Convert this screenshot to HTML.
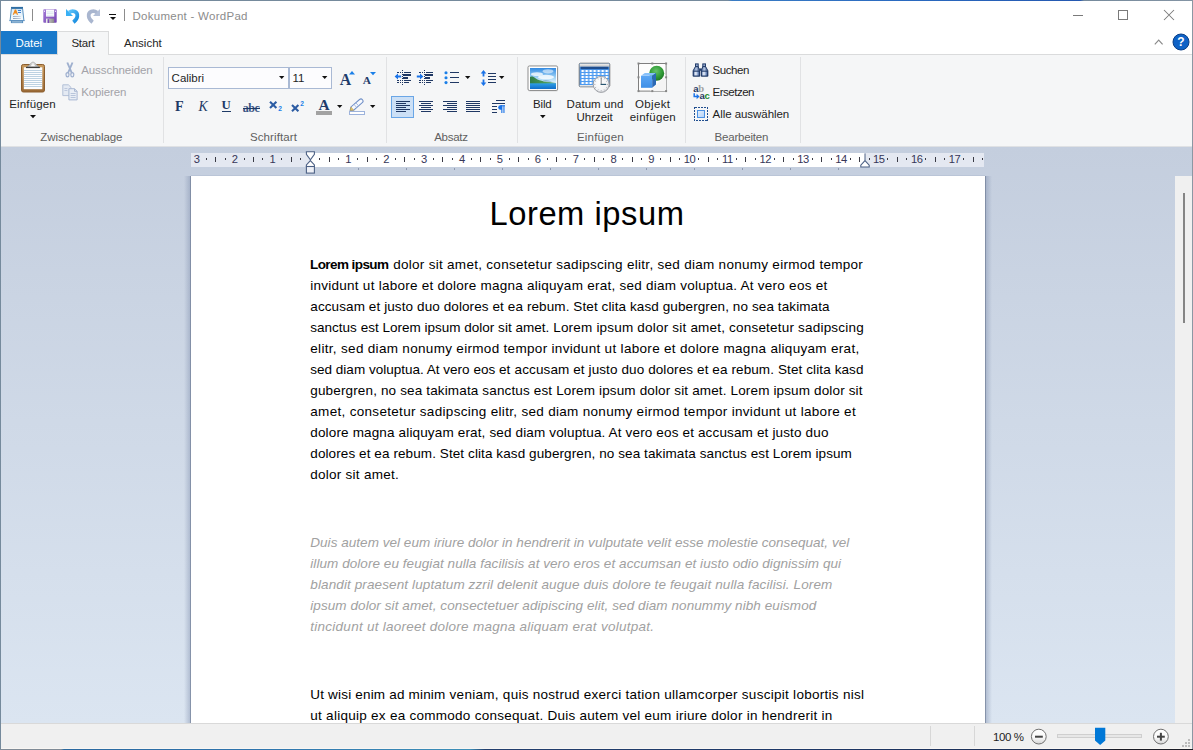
<!DOCTYPE html>
<html lang="de">
<head>
<meta charset="utf-8">
<title>Dokument - WordPad</title>
<style>
html,body{margin:0;padding:0;}
body{width:1193px;height:750px;position:relative;overflow:hidden;background:#fff;font-family:"Liberation Sans",sans-serif;}
#win{position:absolute;left:0;top:0;width:1193px;height:750px;overflow:hidden;background:#fff;}
.a{position:absolute;}
.t{position:absolute;white-space:pre;font-family:"Liberation Sans",sans-serif;}
.t b{font-weight:700;}
svg{position:absolute;overflow:visible;}
/* frame */
#bt{left:0;top:0;width:1193px;height:1px;background:linear-gradient(90deg,#758a9c 0,#758a9c 728px,#3a7cc4 732px,#2a6ac0 900px,#2458b0 1080px,#758a9c 1084px,#8494a4 1193px);}
#bl{left:0;top:0;width:1px;height:749px;background:#758a9c;}
#br{left:1192px;top:0;width:1px;height:749px;background:#8b97a3;}
#bw{left:1px;top:748px;width:1191px;height:1px;background:#f9f6f3;}
#bb{left:0;top:749px;width:1193px;height:1px;background:linear-gradient(90deg,#808b97 0,#808b97 61px,#2a689f 64px,#2f74ad 250px,#3d8fb8 470px,#223f6e 485px,#1d3868 800px,#1b2c50 1100px,#1a1c26 1115px,#1a1c26 1193px);}
/* tabs */
#tabline{left:1px;top:54px;width:1191px;height:1px;background:#dadbdc;}
#datei{left:1px;top:31px;width:56px;height:23px;background:#1979ca;}
#start{left:57px;top:31px;width:50px;height:24px;background:#f5f6f7;border:1px solid #dadbdc;border-bottom:none;box-sizing:content-box;}
/* ribbon */
#ribbon{left:1px;top:55px;width:1191px;height:91px;background:#f5f6f7;}
#ribline{left:1px;top:146px;width:1191px;height:1px;background:#dfe1e4;}
.sep{position:absolute;top:57px;width:1px;height:86px;background:#e1e2e4;}
/* workspace */
#ws{left:1px;top:147px;width:1191px;height:576px;background:linear-gradient(180deg,#c4cede 0%,#dbe5f1 100%);}
#rulerbg{left:191px;top:153px;width:793px;height:14px;background:#e4e8f1;}
#rulerw{left:310px;top:153px;width:555px;height:14px;background:#fff;}
#page{left:191px;top:176px;width:794px;height:547px;background:#fff;}
#shl{left:184px;top:176px;width:7px;height:547px;background:linear-gradient(90deg,rgba(130,145,175,0) 0,rgba(130,145,175,.45) 6px,rgba(110,124,150,.78) 6px,rgba(110,124,150,.78) 7px);}
#shr{left:985px;top:176px;width:7px;height:547px;background:linear-gradient(270deg,rgba(130,145,175,0) 0,rgba(130,145,175,.45) 6px,rgba(110,124,150,.78) 6px,rgba(110,124,150,.78) 7px);}
#sht{left:191px;top:175px;width:794px;height:1px;background:rgba(140,155,185,.18);}
/* scrollbar */
#sb{left:1175px;top:176px;width:17px;height:547px;background:#f0f0f0;}
#thumb{left:1183px;top:193px;width:2px;height:130px;background:#858585;}
/* status */
#status{left:1px;top:723px;width:1191px;height:25px;background:#f0f0f0;border-top:1px solid #d9d9d9;box-sizing:border-box;}
.ssep{position:absolute;top:726px;width:1px;height:20px;background:#d7d7d7;}
/* combos */
.combo{position:absolute;top:67px;height:22px;box-sizing:border-box;border:1px solid #a9b9d4;background:#fcfcfe;}
.arr{position:absolute;width:0;height:0;border-left:3px solid transparent;border-right:3px solid transparent;border-top:3px solid #1a1a1a;}
</style>
</head>
<body>
<div id="win">
<div class="a" id="datei"></div>
<div class="a" id="tabline"></div>
<div class="a" id="start"></div>
<div class="a" id="ribbon"></div>
<div class="a" id="ribline"></div>
<div class="sep" style="left:163px"></div>
<div class="sep" style="left:386px"></div>
<div class="sep" style="left:517px"></div>
<div class="sep" style="left:685px"></div>
<div class="sep" style="left:800px"></div>
<div class="a" id="ws"></div>
<div class="a" id="rulerbg"></div>
<div class="a" id="rulerw"></div>
<div class="a" id="shl"></div>
<div class="a" id="shr"></div>
<div class="a" id="sht"></div>
<div class="a" id="page"></div>
<svg width="1193" height="750" style="left:0;top:0" shape-rendering="crispEdges"><g fill="#3a3a44"><rect x="206" y="158" width="1" height="2"/><rect x="215" y="157" width="1" height="5"/><rect x="225" y="158" width="1" height="2"/><rect x="244" y="158" width="1" height="2"/><rect x="253" y="157" width="1" height="5"/><rect x="262" y="158" width="1" height="2"/><rect x="281" y="158" width="1" height="2"/><rect x="291" y="157" width="1" height="5"/><rect x="300" y="158" width="1" height="2"/><rect x="319" y="158" width="1" height="2"/><rect x="329" y="157" width="1" height="5"/><rect x="338" y="158" width="1" height="2"/><rect x="357" y="158" width="1" height="2"/><rect x="367" y="157" width="1" height="5"/><rect x="376" y="158" width="1" height="2"/><rect x="395" y="158" width="1" height="2"/><rect x="404" y="157" width="1" height="5"/><rect x="414" y="158" width="1" height="2"/><rect x="433" y="158" width="1" height="2"/><rect x="442" y="157" width="1" height="5"/><rect x="452" y="158" width="1" height="2"/><rect x="471" y="158" width="1" height="2"/><rect x="480" y="157" width="1" height="5"/><rect x="490" y="158" width="1" height="2"/><rect x="509" y="158" width="1" height="2"/><rect x="518" y="157" width="1" height="5"/><rect x="528" y="158" width="1" height="2"/><rect x="547" y="158" width="1" height="2"/><rect x="556" y="157" width="1" height="5"/><rect x="565" y="158" width="1" height="2"/><rect x="584" y="158" width="1" height="2"/><rect x="594" y="157" width="1" height="5"/><rect x="603" y="158" width="1" height="2"/><rect x="622" y="158" width="1" height="2"/><rect x="632" y="157" width="1" height="5"/><rect x="641" y="158" width="1" height="2"/><rect x="660" y="158" width="1" height="2"/><rect x="670" y="157" width="1" height="5"/><rect x="679" y="158" width="1" height="2"/><rect x="698" y="158" width="1" height="2"/><rect x="708" y="157" width="1" height="5"/><rect x="717" y="158" width="1" height="2"/><rect x="736" y="158" width="1" height="2"/><rect x="745" y="157" width="1" height="5"/><rect x="755" y="158" width="1" height="2"/><rect x="774" y="158" width="1" height="2"/><rect x="783" y="157" width="1" height="5"/><rect x="793" y="158" width="1" height="2"/><rect x="812" y="158" width="1" height="2"/><rect x="821" y="157" width="1" height="5"/><rect x="831" y="158" width="1" height="2"/><rect x="850" y="158" width="1" height="2"/><rect x="859" y="157" width="1" height="5"/><rect x="869" y="158" width="1" height="2"/><rect x="887" y="158" width="1" height="2"/><rect x="897" y="157" width="1" height="5"/><rect x="906" y="158" width="1" height="2"/><rect x="925" y="158" width="1" height="2"/><rect x="935" y="157" width="1" height="5"/><rect x="944" y="158" width="1" height="2"/><rect x="963" y="158" width="1" height="2"/><rect x="973" y="157" width="1" height="5"/><rect x="982" y="158" width="1" height="2"/></g><g fill="#8e99b0"><rect x="358" y="168" width="1" height="2"/><rect x="406" y="168" width="1" height="2"/><rect x="454" y="168" width="1" height="2"/><rect x="502" y="168" width="1" height="2"/><rect x="550" y="168" width="1" height="2"/><rect x="598" y="168" width="1" height="2"/><rect x="646" y="168" width="1" height="2"/><rect x="694" y="168" width="1" height="2"/><rect x="742" y="168" width="1" height="2"/><rect x="790" y="168" width="1" height="2"/><rect x="838" y="168" width="1" height="2"/></g></svg>
<div class="t rn" style="left:181.7px;top:151.9px;width:30px;text-align:center;font-size:11.2px;line-height:15px;color:#363658;letter-spacing:-0.5px">3</div>
<div class="t rn" style="left:219.5px;top:151.9px;width:30px;text-align:center;font-size:11.2px;line-height:15px;color:#363658;letter-spacing:-0.5px">2</div>
<div class="t rn" style="left:257.4px;top:151.9px;width:30px;text-align:center;font-size:11.2px;line-height:15px;color:#363658;letter-spacing:-0.5px">1</div>
<div class="t rn" style="left:333.2px;top:151.9px;width:30px;text-align:center;font-size:11.2px;line-height:15px;color:#363658;letter-spacing:-0.5px">1</div>
<div class="t rn" style="left:371.1px;top:151.9px;width:30px;text-align:center;font-size:11.2px;line-height:15px;color:#363658;letter-spacing:-0.5px">2</div>
<div class="t rn" style="left:408.9px;top:151.9px;width:30px;text-align:center;font-size:11.2px;line-height:15px;color:#363658;letter-spacing:-0.5px">3</div>
<div class="t rn" style="left:446.8px;top:151.9px;width:30px;text-align:center;font-size:11.2px;line-height:15px;color:#363658;letter-spacing:-0.5px">4</div>
<div class="t rn" style="left:484.7px;top:151.9px;width:30px;text-align:center;font-size:11.2px;line-height:15px;color:#363658;letter-spacing:-0.5px">5</div>
<div class="t rn" style="left:522.6px;top:151.9px;width:30px;text-align:center;font-size:11.2px;line-height:15px;color:#363658;letter-spacing:-0.5px">6</div>
<div class="t rn" style="left:560.5px;top:151.9px;width:30px;text-align:center;font-size:11.2px;line-height:15px;color:#363658;letter-spacing:-0.5px">7</div>
<div class="t rn" style="left:598.3px;top:151.9px;width:30px;text-align:center;font-size:11.2px;line-height:15px;color:#363658;letter-spacing:-0.5px">8</div>
<div class="t rn" style="left:636.2px;top:151.9px;width:30px;text-align:center;font-size:11.2px;line-height:15px;color:#363658;letter-spacing:-0.5px">9</div>
<div class="t rn" style="left:674.4px;top:151.9px;width:30px;text-align:center;font-size:11.2px;line-height:15px;color:#363658;letter-spacing:-0.5px">10</div>
<div class="t rn" style="left:712.3px;top:151.9px;width:30px;text-align:center;font-size:11.2px;line-height:15px;color:#363658;letter-spacing:-0.5px">11</div>
<div class="t rn" style="left:750.2px;top:151.9px;width:30px;text-align:center;font-size:11.2px;line-height:15px;color:#363658;letter-spacing:-0.5px">12</div>
<div class="t rn" style="left:788.0px;top:151.9px;width:30px;text-align:center;font-size:11.2px;line-height:15px;color:#363658;letter-spacing:-0.5px">13</div>
<div class="t rn" style="left:825.9px;top:151.9px;width:30px;text-align:center;font-size:11.2px;line-height:15px;color:#363658;letter-spacing:-0.5px">14</div>
<div class="t rn" style="left:863.8px;top:151.9px;width:30px;text-align:center;font-size:11.2px;line-height:15px;color:#363658;letter-spacing:-0.5px">15</div>
<div class="t rn" style="left:901.7px;top:151.9px;width:30px;text-align:center;font-size:11.2px;line-height:15px;color:#363658;letter-spacing:-0.5px">16</div>
<div class="t rn" style="left:939.6px;top:151.9px;width:30px;text-align:center;font-size:11.2px;line-height:15px;color:#363658;letter-spacing:-0.5px">17</div>
<svg width="12" height="26" style="left:304px;top:150px" viewBox="0 0 12 26">
<path d="M2.4 1.7h8v2.6l-4 5.6l-4-5.6z" fill="#fff" stroke="#4d6185" stroke-width="1.1"/>
<path d="M6.4 10.6l4 4.400v1.500h-8v-1.500z" fill="#fff" stroke="#4d6185" stroke-width="1.1"/>
<rect x="2.4" y="16.500" width="8" height="6.600" fill="#eef0f6" stroke="#4d6185" stroke-width="1.1"/>
</svg>
<svg width="12" height="16" style="left:858.6px;top:152px" viewBox="0 0 12 16">
<path d="M6 1.400v7" stroke="#4d6185" stroke-width="1"/>
<path d="M6 8.600l4.200 4.600v1.800h-8.400v-1.800z" fill="#fff" stroke="#4d6185" stroke-width="1.100"/>
</svg>
<div class="a" id="sb"></div>
<div class="a" id="thumb"></div>
<div class="a" id="status"></div>
<div class="ssep" style="left:930px"></div>
<div class="ssep" style="left:974px"></div>
<div class="combo" style="left:168px;width:121px"></div>
<div class="combo" style="left:289px;width:43px"></div>
<!-- title bar icons -->
<svg width="18" height="18" style="left:8px;top:6px" viewBox="0 0 18 18">
<defs><linearGradient id="gApp" x1="0" y1="0" x2="0" y2="1"><stop offset="0" stop-color="#d9ecfa"/><stop offset="1" stop-color="#f7fbfe"/></linearGradient>
<linearGradient id="gAl" x1="0" y1="0" x2="1" y2="0"><stop offset="0" stop-color="#8797ad"/><stop offset="1" stop-color="#c3cede"/></linearGradient></defs>
<path d="M3.400 2.600h11.200l1.300 11.900H2.100z" fill="url(#gApp)" stroke="#4a86b8" stroke-width=".9"/>
<rect x="3" y=".9" width="12" height="1.800" fill="#2f6ea3"/>
<path d="M1 14.600h16" stroke="#6a9cc8" stroke-width=".9" opacity=".85"/>
<rect x="3.300" y="15.200" width="11.400" height="1.500" fill="#f2f7fc" stroke="#4a86b8" stroke-width=".8"/>
<path d="M4.700 8.800L6.800 3.500h1.300l2 5.300H8.800L8.400 7.600H6.400L6 8.800z" fill="#f08a1c"/>
<rect x="9.900" y="4" width="3.100" height="1" fill="#3e7fd0"/>
<rect x="9.900" y="6" width="3.100" height="1" fill="#3e7fd0"/>
<rect x="5" y="10.200" width="7.600" height=".8" fill="url(#gAl)"/>
<rect x="5" y="12" width="7.800" height=".9" fill="url(#gAl)"/>
</svg>
<div class="a" style="left:32px;top:9px;width:1px;height:12px;background:#8c8c8c"></div>
<div class="a" style="left:124px;top:9px;width:1px;height:12px;background:#8c8c8c"></div>
<svg width="14" height="14" style="left:43px;top:9px" viewBox="0 0 14 14">
<defs><linearGradient id="gSv" x1="0" y1="0" x2="1" y2="1"><stop offset="0" stop-color="#a47bd6"/><stop offset="1" stop-color="#7446b4"/></linearGradient>
<linearGradient id="gSh" x1="0" y1="0" x2="1" y2="0"><stop offset="0" stop-color="#f2f2f2"/><stop offset=".45" stop-color="#b5b5b5"/><stop offset="1" stop-color="#8a8a8a"/></linearGradient></defs>
<rect x=".3" y=".3" width="13.4" height="13.4" rx=".8" fill="url(#gSv)"/>
<rect x="3" y=".6" width="8.2" height="7" fill="#fbfcfd"/>
<rect x="3.6" y="2.6" width="7" height=".7" fill="#cfe0ea"/><rect x="3.6" y="4.4" width="7" height=".7" fill="#cfe0ea"/><rect x="3.6" y="6.1" width="7" height=".6" fill="#d8e6ee"/>
<rect x="1" y="1.6" width="1" height="1.4" fill="#e9defa"/><rect x="12" y="1.6" width="1" height="1.4" fill="#e9defa"/>
<rect x="3" y="9.6" width="8.2" height="4.4" fill="url(#gSh)"/>
<rect x="4.6" y="10.2" width="1.6" height="3.8" fill="#7a4cb6"/>
</svg>
<svg width="14" height="15" style="left:66px;top:9px" viewBox="0 0 14 15">
<defs><linearGradient id="gUn" x1="0" y1="0" x2="1" y2="1"><stop offset="0" stop-color="#5cc3fa"/><stop offset="1" stop-color="#168ade"/></linearGradient></defs>
<path d="M0 0v7h7z" fill="#38b0f5"/>
<path d="M3 3.5C6.6 .9 11.8 2.4 11.3 7.2C11 9.8 9.4 11.6 7.4 13.2" fill="none" stroke="url(#gUn)" stroke-width="3.7"/>
</svg>
<svg width="14" height="15" style="left:86px;top:9px" viewBox="0 0 14 15">
<path d="M14 0v7h-7z" fill="#b4c0d8"/>
<path d="M11 3.5C7.4 .9 2.2 2.4 2.7 7.2C3 9.8 4.6 11.6 6.6 13.2" fill="none" stroke="#a9b6cf" stroke-width="3.7"/>
</svg>
<div class="a" style="left:109px;top:14px;width:7px;height:1px;background:#111"></div>
<div class="arr" style="left:109.5px;top:17px;border-top-color:#111"></div>
<!-- window controls -->
<svg width="120" height="30" style="left:1065px;top:1px" viewBox="0 0 120 30" shape-rendering="crispEdges">
<rect x="8" y="14" width="10" height="1" fill="#7a7a7a"/>
<rect x="53.5" y="9.5" width="9" height="9" fill="none" stroke="#7a7a7a" stroke-width="1"/>
<g shape-rendering="geometricPrecision"><path d="M99 9l10 10M109 9l-10 10" stroke="#7a7a7a" stroke-width="1.05" fill="none"/></g>
</svg>
<svg width="10" height="6" style="left:1153.8px;top:39px" viewBox="0 0 10 6"><path d="M.8 5.3L4.7 1.2L8.6 5.3" fill="none" stroke="#8a8a8a" stroke-width="1.2"/></svg>
<svg width="18" height="18" style="left:1172px;top:33px" viewBox="0 0 18 18">
<circle cx="9" cy="9" r="8" fill="#0f62c6" stroke="#0a3f86" stroke-width="1"/>
<text x="9" y="13.3" text-anchor="middle" font-family="Liberation Sans" font-weight="700" font-size="12" fill="#fff">?</text>
</svg>
<!-- clipboard group -->
<svg width="26" height="32" style="left:20px;top:61px" viewBox="0 0 26 32">
<defs><linearGradient id="gCb" x1="0" y1="0" x2="0" y2="1"><stop offset="0" stop-color="#c99b5f"/><stop offset="1" stop-color="#9a6a36"/></linearGradient>
<linearGradient id="gCl" x1="0" y1="0" x2="0" y2="1"><stop offset="0" stop-color="#fafafa"/><stop offset="1" stop-color="#9c9c9c"/></linearGradient></defs>
<rect x="1.5" y="3.5" width="23" height="27.5" rx="1.8" fill="url(#gCb)" stroke="#8c5e2e" stroke-width="1"/>
<rect x="3.8" y="6.3" width="18.5" height="21.9" fill="#fdfdfe"/>
<g fill="#bdd2e2" shape-rendering="crispEdges"><rect x="4" y="9" width="18" height="1"/><rect x="4" y="11" width="18" height="1"/><rect x="4" y="13" width="18" height="1"/><rect x="4" y="15" width="18" height="1"/><rect x="4" y="17" width="18" height="1"/><rect x="4" y="19" width="18" height="1"/><rect x="4" y="21" width="18" height="1"/><rect x="4" y="23" width="18" height="1"/><rect x="4" y="25" width="18" height="1"/></g>
<path d="M6.4 6.400L12.200 1.300h1.600L19.600 6.400z" fill="url(#gCl)" stroke="#8f8f8f" stroke-width=".7"/>
<path d="M10.400 5.200L13 2.800L15.600 5.200z" fill="#fbfbfb"/>
<rect x="6" y="5.900" width="13.800" height="1.200" fill="#3c3c3c"/>
</svg>
<svg width="6" height="4" style="left:29.6px;top:115px" viewBox="0 0 6 4"><path d="M0 0h6L3 3.2z" fill="#111"/></svg>
<!-- scissors -->
<svg width="11" height="16" style="left:64.5px;top:61.5px" viewBox="0 0 11 16">
<g fill="none" stroke="#9fb0cf" stroke-width="1.900"><path d="M2.300 .5L6.800 11"/><path d="M7.500 .5L3 11"/></g>
<ellipse cx="2.500" cy="12.700" rx="1.500" ry="2.100" fill="#eef1f7" stroke="#9fb0cf" stroke-width="1.200"/>
<ellipse cx="7.300" cy="12.700" rx="1.500" ry="2.100" fill="#eef1f7" stroke="#9fb0cf" stroke-width="1.200"/>
</svg>
<!-- copy -->
<svg width="17" height="17" style="left:61.5px;top:84px" viewBox="0 0 17 17">
<path d="M.8 .8h5.6l2.6 2.6v8.2H.8z" fill="#e4eaf3" stroke="#b3c0d8" stroke-width="1"/>
<path d="M6.9 4.7h5.6l2.6 2.6v8.6H6.9z" fill="#e9eef6" stroke="#a9b8d3" stroke-width="1"/>
<path d="M12.5 4.7v2.6h2.6" fill="none" stroke="#a9b8d3" stroke-width="1"/>
<g fill="#b3c0d8"><rect x="8.6" y="9" width="5" height=".9"/><rect x="8.6" y="11" width="5" height=".9"/><rect x="8.6" y="13" width="5" height=".9"/><rect x="2.4" y="4" width="3" height=".8"/><rect x="2.4" y="6" width="3" height=".8"/></g>
</svg>
<!-- combo arrows -->
<svg width="6" height="4" style="left:278.8px;top:76px" viewBox="0 0 6 4"><path d="M0 0h5.4L2.7 3z" fill="#111"/></svg>
<svg width="6" height="4" style="left:321.8px;top:76px" viewBox="0 0 6 4"><path d="M0 0h5.4L2.7 3z" fill="#111"/></svg>
<!-- grow / shrink font -->
<div class="t" style="left:339.8px;top:69.600px;font-family:'Liberation Serif',serif;font-weight:700;font-size:15.800px;line-height:20px;color:#1f3c6b">A</div>
<svg width="7" height="4" style="left:348.6px;top:70.8px" viewBox="0 0 7 4"><path d="M0 3.4h6L3 0z" fill="#1a7fe8"/></svg>
<div class="t" style="left:362.8px;top:72.400px;font-family:'Liberation Serif',serif;font-weight:700;font-size:11.400px;line-height:16px;color:#1f3c6b">A</div>
<svg width="7" height="4" style="left:369.6px;top:72px" viewBox="0 0 7 4"><path d="M0 0h6L3 3.2z" fill="#1a7fe8"/></svg>
<!-- F K U abc -->
<div class="t" style="left:175px;top:96.900px;font-family:'Liberation Serif',serif;font-weight:700;font-size:14.200px;line-height:18px;color:#1e3a66">F</div>
<div class="t" style="left:198.4px;top:97.6px;font-family:'Liberation Serif',serif;font-style:italic;font-size:13.8px;line-height:18px;color:#1e3a66">K</div>
<div class="t" style="left:221.6px;top:96px;font-family:'Liberation Serif',serif;font-weight:700;font-size:12.8px;line-height:18px;color:#1e3a66">U</div>
<div class="a" style="left:222px;top:111px;width:9px;height:1px;background:#1e3a66"></div>
<div class="t" style="left:242.8px;top:100.100px;font-family:'Liberation Serif',serif;font-weight:700;font-size:12px;line-height:16px;color:#3a5585;letter-spacing:-.45px">abc</div>
<div class="a" style="left:242.5px;top:107.600px;width:17px;height:1px;background:#1e3a66"></div>
<!-- X2 / X^2 -->
<svg width="14" height="11" style="left:268.6px;top:101.2px" viewBox="0 0 14 11"><path d="M1 .8L7.4 7M7.4 .8L1 7" stroke="#2c5ca3" stroke-width="2.1" fill="none"/>
<text x="9.2" y="9.8" font-family="Liberation Sans" font-weight="700" font-size="6.600" fill="#1a7fe8">2</text></svg>
<svg width="14" height="11" style="left:291.4px;top:101.4px" viewBox="0 0 14 11"><path d="M1 4L7.4 10.2M7.4 4L1 10.2" stroke="#2c5ca3" stroke-width="2.1" fill="none"/>
<text x="9.2" y="4.6" font-family="Liberation Sans" font-weight="700" font-size="6.600" fill="#1a7fe8">2</text></svg>
<!-- font color -->
<div class="t" style="left:318.4px;top:94.7px;font-family:'Liberation Serif',serif;font-weight:700;font-size:15.4px;line-height:19px;color:#1f3c6b">A</div>
<div class="a" style="left:316px;top:111px;width:16px;height:4px;background:#a2a2a2"></div>
<svg width="6" height="4" style="left:336.9px;top:105px" viewBox="0 0 6 4"><path d="M0 0h5.4L2.7 3z" fill="#111"/></svg>
<!-- highlighter -->
<svg width="18" height="18" style="left:348px;top:98px" viewBox="0 0 18 18">
<rect x="1.5" y="13.5" width="15" height="3" fill="#fff" stroke="#9db3dc" stroke-width="1"/>
<g transform="rotate(-41 2.2 12.4)"><path d="M2.2 12.4L5 10.300h11.400a2 2 0 0 1 0 4.200H5z" fill="#f7f9fd" stroke="#6f8fc7" stroke-width="1"/>
<path d="M2.2 12.4L5 10.300v4.200z" fill="#e3c46a" stroke="#b59a48" stroke-width=".5"/>
<path d="M9 10.300v4.200M11.500 10.300v4.200" stroke="#9db3dc" stroke-width=".8"/></g>
</svg>
<svg width="6" height="4" style="left:369.9px;top:105px" viewBox="0 0 6 4"><path d="M0 0h5.4L2.7 3z" fill="#111"/></svg>
<!-- paragraph group -->
<!-- decrease indent -->
<svg width="18" height="16" style="left:394px;top:70px" viewBox="0 0 18 16" shape-rendering="crispEdges">
<g fill="#1f3864">
<rect x="8" y="0" width="1" height="1"/><rect x="8" y="2" width="1" height="1"/><rect x="8" y="4" width="1" height="1"/><rect x="8" y="6" width="1" height="1"/><rect x="8" y="8" width="1" height="1"/><rect x="8" y="10" width="1" height="1"/><rect x="8" y="12" width="1" height="1"/><rect x="8" y="14" width="1" height="1"/>
<rect x="3" y="2" width="2" height="1"/><rect x="6" y="2" width="1" height="1"/><rect x="10" y="2" width="7" height="1"/>
<rect x="9" y="4" width="8" height="2"/>
<rect x="9" y="7" width="5" height="2"/>
<rect x="3" y="10" width="2" height="1"/><rect x="6" y="10" width="1" height="1"/><rect x="10" y="10" width="7" height="1"/>
<rect x="3" y="12" width="2" height="1"/><rect x="6" y="12" width="1" height="1"/><rect x="10" y="12" width="5" height="1"/>
</g>
<g shape-rendering="geometricPrecision"><path d="M.6 6.5L4 3.6v1.9h3.2v2H4v1.9z" fill="#1a73e8"/></g>
</svg>
<!-- increase indent -->
<svg width="18" height="16" style="left:416px;top:70px" viewBox="0 0 18 16" shape-rendering="crispEdges">
<g fill="#1f3864">
<rect x="8" y="0" width="1" height="1"/><rect x="8" y="2" width="1" height="1"/><rect x="8" y="4" width="1" height="1"/><rect x="8" y="6" width="1" height="1"/><rect x="8" y="8" width="1" height="1"/><rect x="8" y="10" width="1" height="1"/><rect x="8" y="12" width="1" height="1"/><rect x="8" y="14" width="1" height="1"/>
<rect x="3" y="2" width="2" height="1"/><rect x="6" y="2" width="1" height="1"/><rect x="10" y="2" width="7" height="1"/>
<rect x="9" y="4" width="8" height="2"/>
<rect x="9" y="7" width="5" height="2"/>
<rect x="3" y="10" width="2" height="1"/><rect x="6" y="10" width="1" height="1"/><rect x="10" y="10" width="7" height="1"/>
<rect x="3" y="12" width="2" height="1"/><rect x="6" y="12" width="1" height="1"/><rect x="10" y="12" width="5" height="1"/>
</g>
<g shape-rendering="geometricPrecision"><path d="M7.4 6.5L4 3.6v1.9H.8v2H4v1.9z" fill="#1a73e8"/></g>
</svg>
<!-- bullets -->
<svg width="16" height="14" style="left:443.5px;top:71px" viewBox="0 0 16 14">
<g fill="#1a7fe8"><circle cx="2" cy="1.8" r="1.55"/><circle cx="2" cy="6.7" r="1.55"/><circle cx="2" cy="11.6" r="1.55"/></g>
<g fill="#1f3864" shape-rendering="crispEdges"><rect x="6" y="1" width="9" height="1"/><rect x="6" y="6" width="9" height="1"/><rect x="6" y="11" width="9" height="1"/></g>
</svg>
<svg width="6" height="4" style="left:464.8px;top:76px" viewBox="0 0 6 4"><path d="M0 0h5.4L2.7 3z" fill="#111"/></svg>
<!-- line spacing -->
<svg width="17" height="17" style="left:480px;top:70px" viewBox="0 0 17 17">
<g fill="#1a73e8"><path d="M3.5 0L6.3 3.4H4.4V6.6H2.6V3.4H.7z"/><path d="M3.5 16L6.3 12.6H4.4V9.4H2.6V12.6H.7z"/></g>
<g fill="#1f3864" shape-rendering="crispEdges"><rect x="8" y="3" width="8" height="1"/><rect x="8" y="6" width="8" height="1"/><rect x="8" y="9" width="8" height="1"/><rect x="8" y="12" width="8" height="1"/></g>
</svg>
<svg width="6" height="4" style="left:499px;top:76px" viewBox="0 0 6 4"><path d="M0 0h5.4L2.7 3z" fill="#111"/></svg>
<!-- alignment -->
<div class="a" style="left:391px;top:96px;width:23px;height:22px;box-sizing:border-box;background:#cce0f6;border:1px solid #6aa6e6"></div>
<svg width="120" height="16" style="left:390px;top:99px" viewBox="0 0 120 16" shape-rendering="crispEdges">
<g fill="#1f3864">
<rect x="6" y="2" width="14" height="1"/><rect x="6" y="4" width="10" height="1"/><rect x="6" y="6" width="14" height="1"/><rect x="6" y="8" width="10" height="1"/><rect x="6" y="10" width="14" height="1"/><rect x="6" y="12" width="10" height="1"/>
<rect x="29" y="2" width="14" height="1"/><rect x="31" y="4" width="10" height="1"/><rect x="29" y="6" width="14" height="1"/><rect x="31" y="8" width="10" height="1"/><rect x="29" y="10" width="14" height="1"/><rect x="31" y="12" width="10" height="1"/>
<rect x="53" y="2" width="14" height="1"/><rect x="57" y="4" width="10" height="1"/><rect x="53" y="6" width="14" height="1"/><rect x="57" y="8" width="10" height="1"/><rect x="53" y="10" width="14" height="1"/><rect x="57" y="12" width="10" height="1"/>
<rect x="76" y="2" width="14" height="1"/><rect x="76" y="4" width="14" height="1"/><rect x="76" y="6" width="14" height="1"/><rect x="76" y="8" width="14" height="1"/><rect x="76" y="10" width="14" height="1"/><rect x="76" y="12" width="14" height="1"/>
<rect x="106" y="1" width="9" height="1"/><rect x="102" y="4" width="13" height="1"/><rect x="102" y="7" width="5" height="1"/><rect x="102" y="10" width="5" height="1"/><rect x="102" y="13" width="5" height="1"/>
</g>
<g shape-rendering="geometricPrecision" fill="#1a73e8"><path d="M112 6.300h-1.600a2.200 2.200 0 0 0 0 4.400H112z"/><rect x="111.300" y="6.300" width="1.100" height="7.700"/><rect x="113.400" y="6.300" width="1.100" height="7.700"/><rect x="110.400" y="6.300" width="4.600" height="1"/></g>
</svg>
<!-- Bild -->
<svg width="32" height="27" style="left:527px;top:64.6px" viewBox="0 0 32 28" preserveAspectRatio="none">
<defs>
<linearGradient id="gSky" x1="0" y1="0" x2="0" y2="1"><stop offset="0" stop-color="#3089e2"/><stop offset=".45" stop-color="#9fd2f5"/><stop offset=".72" stop-color="#e6f4fb"/><stop offset="1" stop-color="#cfeaf8"/></linearGradient>
<linearGradient id="gWat" x1="0" y1="0" x2="0" y2="1"><stop offset="0" stop-color="#2f9fe6"/><stop offset="1" stop-color="#0f6cc8"/></linearGradient>
<linearGradient id="gHill" x1="0" y1="0" x2="1" y2="0"><stop offset="0" stop-color="#2f7d4a"/><stop offset=".6" stop-color="#4c9a58"/><stop offset="1" stop-color="#7fb7a8"/></linearGradient>
<clipPath id="cpB"><rect x="3" y="3" width="26" height="22"/></clipPath>
</defs>
<rect x="1.300" y="2" width="29.600" height="25.400" rx="1.600" fill="#b9b9b9" opacity=".45"/>
<rect x="1" y="1" width="29.6" height="25.4" rx="1.4" fill="#fff" stroke="#8b8b8b" stroke-width="1"/>
<g clip-path="url(#cpB)">
<rect x="3" y="3" width="26" height="22" fill="url(#gSky)"/>
<ellipse cx="10" cy="9.5" rx="6" ry="2" fill="#fff" opacity=".75"/>
<ellipse cx="21" cy="6.5" rx="5.5" ry="2.2" fill="#fff" opacity=".55"/>
<ellipse cx="19" cy="12.5" rx="8" ry="2.4" fill="#fff" opacity=".8"/>
<path d="M3 12.4C5 11.4 6.5 12 8.5 13.8C11 15.6 14 16.4 17 17C21 17.4 25 17.6 29 18.6V20H3z" fill="url(#gHill)"/>
<path d="M15 16.5C18 14.6 22 15.6 25 17.6z" fill="#7faed0" opacity=".8"/>
<rect x="3" y="19" width="26" height="6" fill="url(#gWat)"/>
</g>
</svg>
<svg width="6" height="4" style="left:539.8px;top:115px" viewBox="0 0 6 4"><path d="M0 0h5.6L2.8 3.2z" fill="#111"/></svg>
<!-- calendar + clock -->
<svg width="34" height="32" style="left:578px;top:62px" viewBox="0 0 34 32">
<defs>
<linearGradient id="gCt" x1="0" y1="0" x2="0" y2="1"><stop offset="0" stop-color="#f2f2f2"/><stop offset="1" stop-color="#bdbdbd"/></linearGradient>
<radialGradient id="gCk" cx=".4" cy=".35" r=".75"><stop offset="0" stop-color="#ffffff"/><stop offset=".7" stop-color="#f2f3f5"/><stop offset="1" stop-color="#c9ccd2"/></radialGradient>
<pattern id="pCal" x="2.5" y="8" width="4" height="3" patternUnits="userSpaceOnUse"><rect width="4" height="3" fill="#4c9af0"/><rect x="1" y="0" width="2.500" height="2" fill="#ffffff"/></pattern>
</defs>
<rect x="1.2" y="1.2" width="30.6" height="23.6" rx="1.2" fill="#4c9af0" stroke="#7c7c7c" stroke-width="1"/>
<rect x="1.8" y="1.8" width="29.4" height="3" fill="url(#gCt)"/>
<rect x="2.6" y="4.8" width="27.8" height="2.4" fill="#1f4e8f"/>
<rect x="2.500" y="8" width="28" height="15" fill="url(#pCal)" shape-rendering="crispEdges"/>
<rect x="1.8" y="23" width="29.4" height="1.4" fill="#e6e6e6"/>
<circle cx="23.2" cy="22.4" r="8" fill="url(#gCk)" stroke="#9b9ea4" stroke-width="1"/>
<g stroke="#8d9198" stroke-width=".7"><path d="M23.2 15.4v1.2M23.2 28.2v1.2M16.2 22.4h1.2M29 22.4h1.2M19.7 16.3l.6 1M26.1 27.5l.6 1M26.7 16.3l-.6 1M20.3 27.5l-.6 1M17.1 18.9l1 .6M28.3 25.3l1 .6M29.3 18.9l-1 .6M18.1 25.3l-1 .6"/></g>
<path d="M23.2 22.4V15.6" stroke="#7d8187" stroke-width="1"/>
<path d="M22.6 22.4h5.6" stroke="#1f4e6c" stroke-width="1.1"/>
</svg>
<!-- object -->
<svg width="32" height="32" style="left:636px;top:61px" viewBox="0 0 32 32">
<defs>
<radialGradient id="gSp" cx=".45" cy=".35" r=".7"><stop offset="0" stop-color="#66c36a"/><stop offset=".6" stop-color="#2f9a35"/><stop offset="1" stop-color="#1b6f22"/></radialGradient>
<linearGradient id="gCf" x1="0" y1="0" x2="0" y2="1"><stop offset="0" stop-color="#5ba6f4"/><stop offset="1" stop-color="#3f8fe6"/></linearGradient>
</defs>
<rect x="2.5" y="2.5" width="27.6" height="27.6" fill="#fdfdfd" stroke="#7f7f7f" stroke-width="1"/>
<path d="M14 30h16V14z" fill="#f4f4f4"/>
<g fill="#858585"><rect x="1.5" y="1.5" width="2" height="2"/><rect x="15.3" y="1.5" width="2" height="2"/><rect x="29.1" y="1.5" width="2" height="2"/><rect x="1.5" y="15.3" width="2" height="2"/><rect x="29.1" y="15.3" width="2" height="2"/><rect x="1.5" y="29.1" width="2" height="2"/><rect x="15.3" y="29.1" width="2" height="2"/><rect x="29.1" y="29.1" width="2" height="2"/></g>
<circle cx="20.7" cy="12.3" r="7.5" fill="url(#gSp)"/>
<path d="M5 14.8h11.2v12H5z" fill="url(#gCf)"/>
<path d="M5 14.8L8.8 12H20l-3.8 2.8z" fill="#86c0fa"/>
<path d="M16.2 14.8L20 12v11.4l-3.800 3.4z" fill="#2b69b5"/>
</svg>
<!-- binoculars -->
<svg width="17" height="14" style="left:692px;top:62.5px" viewBox="0 0 17 14">
<defs><linearGradient id="gBn" x1="0" y1="0" x2="1" y2="0"><stop offset="0" stop-color="#5d7bb0"/><stop offset=".4" stop-color="#eef3fb"/><stop offset=".7" stop-color="#8aa3cf"/><stop offset="1" stop-color="#2f4b7e"/></linearGradient>
<linearGradient id="gBt" x1="0" y1="0" x2="1" y2="0"><stop offset="0" stop-color="#4a68a0"/><stop offset=".45" stop-color="#b8c8e4"/><stop offset="1" stop-color="#2f4b7e"/></linearGradient></defs>
<g stroke="#233c69" stroke-width="1">
<path d="M3.4 3.600L1.300 7.400v5.600h6.300V7.400L6.200 3.600z" fill="url(#gBt)"/>
<path d="M10.800 3.600L9.400 7.400v5.600h6.300V7.400L13.600 3.600z" fill="url(#gBt)"/>
<rect x="3.500" y=".9" width="2.700" height="2.700" fill="#8fa6cf"/><rect x="10.800" y=".9" width="2.700" height="2.700" fill="#8fa6cf"/>
<rect x="1.300" y="8.200" width="6.300" height="4.800" fill="url(#gBn)"/><rect x="9.400" y="8.200" width="6.300" height="4.800" fill="url(#gBn)"/>
</g>
<rect x="7.300" y="5.400" width="2.400" height="2.400" fill="#233c69"/>
</svg>
<!-- replace -->
<div class="t" style="left:693.200px;top:82.800px;font-size:9.500px;line-height:12px;font-weight:700;color:#1f3864">a</div>
<div class="t" style="left:698.300px;top:83.200px;font-family:'Liberation Serif',serif;font-weight:700;font-size:10.500px;line-height:12px;color:#a0a0a0">b</div>
<div class="t" style="left:699.600px;top:90px;font-size:9.500px;line-height:12px;font-weight:700;color:#1f3864">a</div>
<div class="t" style="left:704.500px;top:90px;font-size:9.500px;line-height:12px;font-weight:700;color:#1c8a2c">c</div>
<svg width="8" height="7" style="left:692.800px;top:92.600px" viewBox="0 0 8 7"><path d="M1.200 .3v3.200h3" fill="none" stroke="#1a73e8" stroke-width="1.500"/><path d="M3.600 .8L6.600 3.500L3.600 6.200z" fill="#1a73e8"/></svg>
<!-- select all -->
<svg width="16" height="16" style="left:693px;top:106px" viewBox="0 0 16 16">
<defs><linearGradient id="gSa" x1="0" y1="0" x2="1" y2="1"><stop offset="0" stop-color="#e3effd"/><stop offset="1" stop-color="#b4d3f8"/></linearGradient></defs>
<rect x="1.500" y="1.500" width="13" height="13" fill="none" stroke="#1f4e8f" stroke-width="1" stroke-dasharray="2 1" shape-rendering="crispEdges"/>
<rect x="4.500" y="4.500" width="7" height="7" fill="url(#gSa)" stroke="#4a90e2" stroke-width="1"/>
</svg>
<!-- status bar -->
<svg width="170" height="25" style="left:1025px;top:723px" viewBox="0 0 170 25">
<defs><linearGradient id="gZb" x1="0" y1="0" x2="0" y2="1"><stop offset="0" stop-color="#ffffff"/><stop offset=".55" stop-color="#fafafa"/><stop offset="1" stop-color="#d4d4d4"/></linearGradient></defs>
<circle cx="13.8" cy="13.600" r="7.400" fill="url(#gZb)" stroke="#707070" stroke-width="1"/>
<rect x="10" y="12.700" width="7.800" height="2" fill="#444"/>
<rect x="32.500" y="11.500" width="84" height="3" fill="#e7e7e7" stroke="#cfcfcf" stroke-width="1"/>
<path d="M70 4.700h10.300v12.800l-5.150 4.600l-5.150-4.600z" fill="#0078d7"/>
<circle cx="135.900" cy="13.600" r="7.400" fill="url(#gZb)" stroke="#707070" stroke-width="1"/>
<rect x="132" y="12.700" width="7.800" height="2" fill="#444"/><rect x="134.900" y="9.800" width="2" height="7.800" fill="#444"/>
<g fill="#bcbcbc"><rect x="163" y="16" width="2" height="2"/><rect x="160" y="19" width="2" height="2"/><rect x="163" y="19" width="2" height="2"/><rect x="157" y="22" width="2" height="2"/><rect x="160" y="22" width="2" height="2"/><rect x="163" y="22" width="2" height="2"/></g>
</svg>

<div class="a" id="doc" style="left:0;top:176px;width:1193px;height:547px;overflow:hidden">
<div class="t" style="left:489.5px;top:16.47px;font-size:32.7px;line-height:43px;color:#000;letter-spacing:0.546px;">Lorem ipsum</div>
<div class="t" style="left:310.0px;top:79.62px;font-size:13.5px;line-height:18px;color:#000;letter-spacing:-0.577px;font-weight:700;">Lorem ipsum</div>
<div class="t" style="left:393.2px;top:79.62px;font-size:13.5px;line-height:18px;color:#000;letter-spacing:0.287px;">dolor sit amet, consetetur sadipscing elitr, sed diam nonumy eirmod tempor</div>
<div class="t" style="left:310.3px;top:100.62px;font-size:13.5px;line-height:18px;color:#000;letter-spacing:0.254px;">invidunt ut labore et dolore magna aliquyam erat, sed diam voluptua. At vero eos et</div>
<div class="t" style="left:310.3px;top:121.62px;font-size:13.5px;line-height:18px;color:#000;letter-spacing:0.099px;">accusam et justo duo dolores et ea rebum. Stet clita kasd gubergren, no sea takimata</div>
<div class="t" style="left:310.3px;top:142.62px;font-size:13.5px;line-height:18px;color:#000;letter-spacing:0.008px;">sanctus est Lorem ipsum dolor sit amet.</div>
<div class="t" style="left:553.2px;top:142.62px;font-size:13.5px;line-height:18px;color:#000;letter-spacing:0.200px;">Lorem ipsum dolor sit amet, consetetur sadipscing</div>
<div class="t" style="left:310.3px;top:163.62px;font-size:13.5px;line-height:18px;color:#000;letter-spacing:0.314px;">elitr, sed diam nonumy eirmod tempor invidunt ut labore et dolore magna aliquyam erat,</div>
<div class="t" style="left:310.3px;top:184.62px;font-size:13.5px;line-height:18px;color:#000;letter-spacing:0.009px;">sed diam voluptua. At vero eos et</div>
<div class="t" style="left:514.6px;top:184.62px;font-size:13.5px;line-height:18px;color:#000;letter-spacing:0.106px;">accusam et justo duo dolores et ea rebum. Stet clita kasd</div>
<div class="t" style="left:310.3px;top:205.62px;font-size:13.5px;line-height:18px;color:#000;letter-spacing:0.146px;">gubergren, no sea takimata sanctus est Lorem ipsum dolor sit amet. Lorem ipsum dolor sit</div>
<div class="t" style="left:310.3px;top:226.62px;font-size:13.5px;line-height:18px;color:#000;letter-spacing:0.307px;">amet, consetetur sadipscing elitr, sed diam nonumy eirmod tempor invidunt ut labore et</div>
<div class="t" style="left:310.3px;top:247.62px;font-size:13.5px;line-height:18px;color:#000;letter-spacing:0.152px;">dolore magna aliquyam erat, sed diam voluptua. At vero eos et accusam et justo duo</div>
<div class="t" style="left:310.3px;top:268.62px;font-size:13.5px;line-height:18px;color:#000;letter-spacing:0.093px;">dolores et ea rebum. Stet clita kasd gubergren, no sea takimata sanctus est Lorem ipsum</div>
<div class="t" style="left:310.3px;top:289.62px;font-size:13.5px;line-height:18px;color:#000;letter-spacing:0.257px;">dolor sit amet.</div>
<div class="t" style="left:310.3px;top:358.32px;font-size:13.5px;line-height:18px;color:#a1a1a1;letter-spacing:0.035px;font-style:italic;">Duis autem vel eum iriure dolor in hendrerit in vulputate velit esse molestie consequat, vel</div>
<div class="t" style="left:310.3px;top:379.32px;font-size:13.5px;line-height:18px;color:#a1a1a1;letter-spacing:0.060px;font-style:italic;">illum dolore eu feugiat nulla facilisis at vero eros et accumsan et iusto odio dignissim qui</div>
<div class="t" style="left:310.3px;top:400.32px;font-size:13.5px;line-height:18px;color:#a1a1a1;letter-spacing:0.114px;font-style:italic;">blandit praesent luptatum zzril delenit augue duis dolore te feugait nulla facilisi. Lorem</div>
<div class="t" style="left:310.3px;top:421.32px;font-size:13.5px;line-height:18px;color:#a1a1a1;letter-spacing:0.078px;font-style:italic;">ipsum dolor sit amet, consectetuer adipiscing elit, sed diam nonummy nibh euismod</div>
<div class="t" style="left:310.3px;top:442.32px;font-size:13.5px;line-height:18px;color:#a1a1a1;letter-spacing:0.259px;font-style:italic;">tincidunt ut laoreet dolore magna aliquam erat volutpat.</div>
<div class="t" style="left:310.3px;top:509.82px;font-size:13.5px;line-height:18px;color:#000;letter-spacing:0.186px;">Ut wisi enim ad minim</div>
<div class="t" style="left:449.6px;top:509.82px;font-size:13.5px;line-height:18px;color:#000;letter-spacing:0.279px;">veniam, quis nostrud exerci tation ullamcorper suscipit lobortis nisl</div>
<div class="t" style="left:310.3px;top:530.82px;font-size:13.5px;line-height:18px;color:#000;letter-spacing:0.271px;">ut aliquip ex ea commodo consequat. Duis autem vel eum iriure dolor in hendrerit in</div>
</div>
<div class="t" style="left:132.5px;top:8.82px;font-size:11.5px;line-height:15px;color:#8c8c8c;letter-spacing:0.272px;">Dokument - WordPad</div>
<div class="t" style="left:15.6px;top:36.32px;font-size:11.5px;line-height:15px;color:#ffffff;letter-spacing:-0.115px;">Datei</div>
<div class="t" style="left:71.4px;top:36.32px;font-size:11.5px;line-height:15px;color:#262626;letter-spacing:-0.224px;">Start</div>
<div class="t" style="left:124.0px;top:36.32px;font-size:11.5px;line-height:15px;color:#262626;letter-spacing:0.014px;">Ansicht</div>
<div class="t" style="left:9.3px;top:97.12px;font-size:11.5px;line-height:15px;color:#1e1e1e;letter-spacing:0.128px;">Einfügen</div>
<div class="t" style="left:81.2px;top:63.02px;font-size:11.5px;line-height:15px;color:#a3a3a9;letter-spacing:-0.068px;">Ausschneiden</div>
<div class="t" style="left:81.2px;top:85.22px;font-size:11.5px;line-height:15px;color:#a3a3a9;letter-spacing:-0.107px;">Kopieren</div>
<div class="t" style="left:40.2px;top:130.02px;font-size:11.5px;line-height:15px;color:#5f5f5f;letter-spacing:-0.062px;">Zwischenablage</div>
<div class="t" style="left:171.6px;top:70.92px;font-size:11.5px;line-height:15px;color:#1e1e1e;letter-spacing:-0.016px;">Calibri</div>
<div class="t" style="left:292.4px;top:70.92px;font-size:11.5px;line-height:15px;color:#1e1e1e;letter-spacing:0.000px;">11</div>
<div class="t" style="left:250.0px;top:130.02px;font-size:11.5px;line-height:15px;color:#5f5f5f;letter-spacing:0.098px;">Schriftart</div>
<div class="t" style="left:434.2px;top:130.02px;font-size:11.5px;line-height:15px;color:#5f5f5f;letter-spacing:-0.274px;">Absatz</div>
<div class="t" style="left:533.0px;top:97.12px;font-size:11.5px;line-height:15px;color:#1e1e1e;letter-spacing:-0.163px;">Bild</div>
<div class="t" style="left:566.6px;top:97.12px;font-size:11.5px;line-height:15px;color:#1e1e1e;letter-spacing:0.054px;">Datum und</div>
<div class="t" style="left:576.6px;top:110.12px;font-size:11.5px;line-height:15px;color:#1e1e1e;letter-spacing:-0.040px;">Uhrzeit</div>
<div class="t" style="left:635.0px;top:97.12px;font-size:11.5px;line-height:15px;color:#1e1e1e;letter-spacing:0.350px;">Objekt</div>
<div class="t" style="left:629.7px;top:110.12px;font-size:11.5px;line-height:15px;color:#1e1e1e;letter-spacing:0.268px;">einfügen</div>
<div class="t" style="left:577.0px;top:130.02px;font-size:11.5px;line-height:15px;color:#5f5f5f;letter-spacing:0.171px;">Einfügen</div>
<div class="t" style="left:712.6px;top:63.02px;font-size:11.5px;line-height:15px;color:#1e1e1e;letter-spacing:-0.443px;">Suchen</div>
<div class="t" style="left:712.6px;top:85.12px;font-size:11.5px;line-height:15px;color:#1e1e1e;letter-spacing:-0.499px;">Ersetzen</div>
<div class="t" style="left:712.6px;top:106.92px;font-size:11.5px;line-height:15px;color:#1e1e1e;letter-spacing:-0.058px;">Alle auswählen</div>
<div class="t" style="left:714.5px;top:129.92px;font-size:11.5px;line-height:15px;color:#5f5f5f;letter-spacing:-0.192px;">Bearbeiten</div>
<div class="t" style="left:993.0px;top:730.32px;font-size:11.5px;line-height:15px;color:#1e1e1e;letter-spacing:-0.402px;">100 %</div>
<div class="a" id="bt"></div>
<div class="a" id="bl"></div>
<div class="a" id="br"></div>
<div class="a" id="bw"></div>
<div class="a" id="bb"></div>
</div>
</body>
</html>
